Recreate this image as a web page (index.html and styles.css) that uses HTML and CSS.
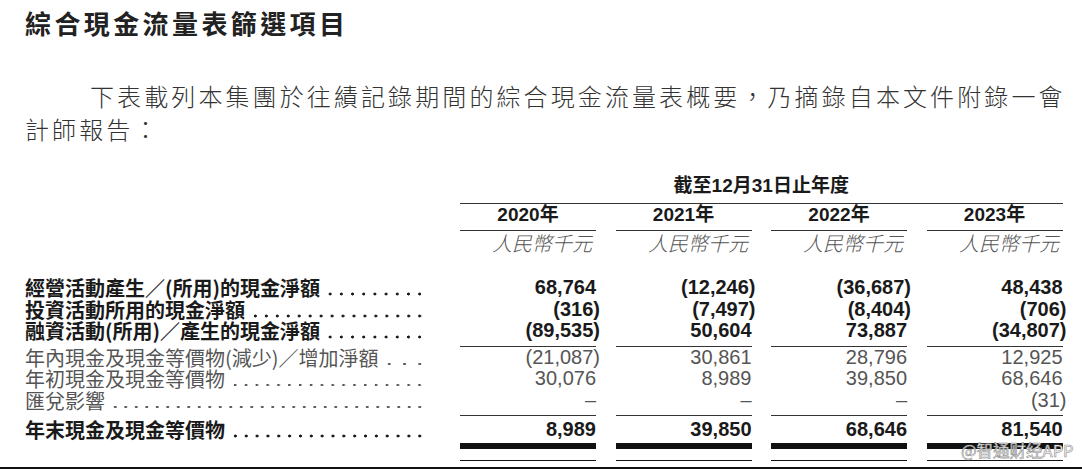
FILE: index.html
```html
<!DOCTYPE html>
<html lang="zh-Hant">
<head>
<meta charset="utf-8">
<title>綜合現金流量表篩選項目</title>
<link rel="stylesheet" href="styles.css">
</head>
<body>
<main class="page">
  <h1 class="title">綜合現金流量表篩選項目</h1>
  <p class="intro">下表載列本集團於往績記錄期間的綜合現金流量表概要，乃摘錄自本文件附錄一會計師報告：</p>

  <section class="table">
    <div class="row">
      <div></div>
      <div class="period">截至12月31日止年度</div>
    </div>
    <div class="row">
      <div></div>
      <div class="yr">2020年</div>
      <div class="yr">2021年</div>
      <div class="yr">2022年</div>
      <div class="yr">2023年</div>
    </div>
    <div class="row">
      <div></div>
      <div class="unit"><span class="slant">人民幣千元</span></div>
      <div class="unit"><span class="slant">人民幣千元</span></div>
      <div class="unit"><span class="slant">人民幣千元</span></div>
      <div class="unit"><span class="slant">人民幣千元</span></div>
    </div>

    <div class="row data strong first">
      <div class="label"><span class="txt">經營活動產生／(所用)的現金淨額</span><span class="dots"></span></div>
      <div class="num">68,764</div>
      <div class="num"><span class="neg">(12,246)</span></div>
      <div class="num"><span class="neg">(36,687)</span></div>
      <div class="num">48,438</div>
    </div>
    <div class="row data strong">
      <div class="label"><span class="txt">投資活動所用的現金淨額</span><span class="dots"></span></div>
      <div class="num"><span class="neg">(316)</span></div>
      <div class="num"><span class="neg">(7,497)</span></div>
      <div class="num"><span class="neg">(8,404)</span></div>
      <div class="num"><span class="neg">(706)</span></div>
    </div>
    <div class="row data strong">
      <div class="label"><span class="txt">融資活動(所用)／產生的現金淨額</span><span class="dots"></span></div>
      <div class="num rule"><span class="neg">(89,535)</span></div>
      <div class="num rule">50,604</div>
      <div class="num rule">73,887</div>
      <div class="num rule"><span class="neg">(34,807)</span></div>
    </div>

    <div class="row data light">
      <div class="label"><span class="txt">年內現金及現金等價物(減少)／增加淨額</span><span class="dots"></span></div>
      <div class="num"><span class="neg">(21,087)</span></div>
      <div class="num">30,861</div>
      <div class="num">28,796</div>
      <div class="num">12,925</div>
    </div>
    <div class="row data light">
      <div class="label"><span class="txt">年初現金及現金等價物</span><span class="dots"></span></div>
      <div class="num">30,076</div>
      <div class="num">8,989</div>
      <div class="num">39,850</div>
      <div class="num">68,646</div>
    </div>
    <div class="row data light">
      <div class="label"><span class="txt">匯兌影響</span><span class="dots"></span></div>
      <div class="num rule">–</div>
      <div class="num rule">–</div>
      <div class="num rule">–</div>
      <div class="num rule"><span class="neg">(31)</span></div>
    </div>

    <div class="row data strong total">
      <div class="label"><span class="txt">年末現金及現金等價物</span><span class="dots"></span></div>
      <div class="num">8,989</div>
      <div class="num">39,850</div>
      <div class="num">68,646</div>
      <div class="num">81,540</div>
    </div>
  </section>
  <div class="edge"></div>
</main>
<div class="watermark">@智通财经APP</div>
</body>
</html>
```

FILE: styles.css
```css
* {
  box-sizing: border-box;
  margin: 0;
  padding: 0;
}

html,
body {
  width: 1082px;
  height: 470px;
  overflow: hidden;
  background: #ffffff;
}

body {
  position: relative;
  font-family: "Noto Sans CJK TC", "Liberation Sans", sans-serif;
  color: #222222;
}

.page {
  display: flex;
  flex-direction: column;
  height: 470px;
  padding: 5px 0 0 25px;
}

.title {
  font-size: 26px;
  line-height: 36px;
  font-weight: 700;
  letter-spacing: 3.4px;
  color: #222222;
}

.intro {
  margin-top: 37.5px;
  width: 1045px;
  font-size: 24px;
  line-height: 33px;
  letter-spacing: 3.1px;
  text-indent: 65px;
  font-weight: 300;
  color: #333333;
}

.table {
  margin-top: 29.5px;
}

.row {
  display: grid;
  grid-template-columns: 415.5px repeat(4, 136px);
  column-gap: 19.5px;
}

.period {
  grid-column: 2 / span 4;
  text-align: center;
  font-family: "Liberation Sans", "Noto Sans CJK TC", sans-serif;
  font-weight: 700;
  font-size: 19px;
  line-height: 24px;
  padding-bottom: 5px;
  border-bottom: 1px solid #333333;
  color: #1a1a1a;
}

.yr {
  text-align: center;
  font-family: "Liberation Sans", "Noto Sans CJK TC", sans-serif;
  font-weight: 700;
  font-size: 19px;
  line-height: 22px;
  padding-bottom: 4px;
  border-bottom: 1px solid #333333;
  color: #1a1a1a;
}

.unit {
  text-align: right;
  font-size: 20px;
  line-height: 24px;
  color: #555555;
  padding-right: 2px;
}

.slant {
  display: inline-block;
  transform: skewX(-14deg);
  font-weight: 300;
}

.data.first {
  margin-top: 22px;
}

.label {
  align-self: start;
  display: flex;
  padding-right: 15.5px;
  white-space: nowrap;
  font-size: 20px;
  line-height: 21.5px;
}

.txt {
  flex: none;
}

.dots {
  flex: 1;
  margin-left: 5px;
  background-image: radial-gradient(circle at center, currentColor 1px, transparent 1.5px);
  background-size: 10.5px 4px;
  background-repeat: space no-repeat;
  background-position: left 0 bottom 2.5px;
}

.strong .dots {
  background-image: radial-gradient(circle at center, currentColor 1.25px, transparent 1.75px);
}

.num {
  text-align: right;
  font-family: "Liberation Sans", sans-serif;
  font-size: 20px;
  line-height: 21.5px;
  white-space: nowrap;
}

.neg {
  display: inline-block;
  margin-right: -4px;
}

.strong .label,
.strong .num {
  font-weight: 700;
  color: #1a1a1a;
}

.light .label,
.light .num {
  font-weight: 400;
  color: #555555;
}

.num.rule {
  padding-bottom: 4px;
  border-bottom: 1px solid #333333;
}

.total > div {
  padding-top: 3px;
}

.total .num::after {
  content: "";
  display: block;
  margin-top: 2.5px;
  height: 11px;
  border-top: 6px solid #111111;
  border-bottom: 1.5px solid #111111;
}

.edge {
  margin-top: auto;
  margin-bottom: 1px;
  margin-left: -25px;
  width: 1082px;
  border-top: 2px solid #111111;
}

.watermark {
  position: absolute;
  left: 961px;
  top: 440px;
  font-family: "Noto Sans CJK SC", "Liberation Sans", sans-serif;
  font-size: 16.5px;
  line-height: 20px;
  color: #ffffff;
  -webkit-text-stroke: 0.6px #8a8a8a;
  white-space: nowrap;
}
```
